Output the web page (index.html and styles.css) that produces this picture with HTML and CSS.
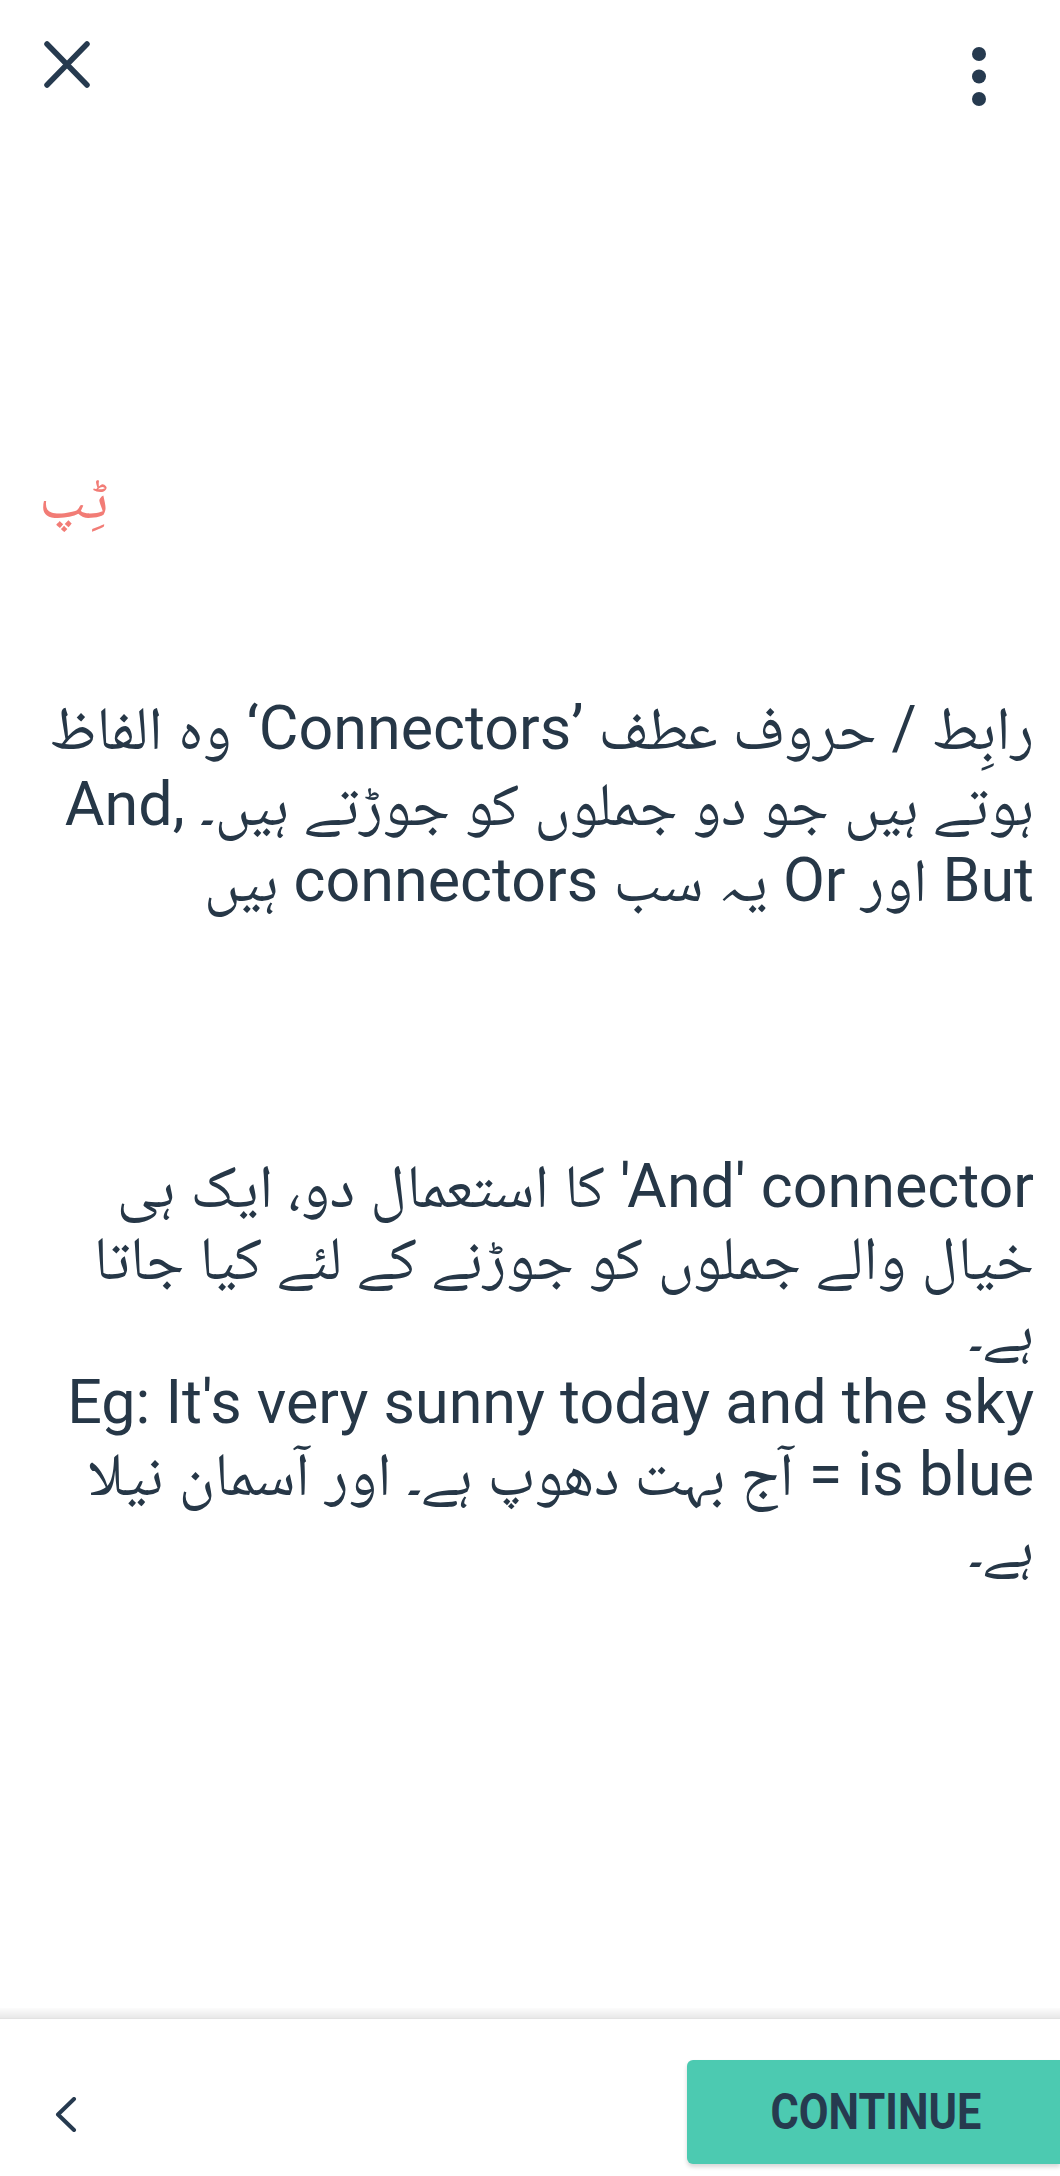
FILE: index.html
```html
<!DOCTYPE html>
<html lang="ur">
<head>
<meta charset="utf-8">
<title>ٹِپ</title>
<link rel="stylesheet" href="styles.css">
</head>
<body>
<div class="page">
  <header class="topbar">
    <svg class="icon-close" width="48" height="49" viewBox="0 0 48 49" aria-label="close">
      <path d="M4 4 L44 45 M44 4 L4 45" stroke="#263a4f" stroke-width="5.5" stroke-linecap="round" fill="none"/>
    </svg>
    <svg class="icon-more" width="16" height="62" viewBox="0 0 16 62" aria-label="more">
      <circle cx="8" cy="8" r="7" fill="#263a4f"/>
      <circle cx="8" cy="30.5" r="7" fill="#263a4f"/>
      <circle cx="8" cy="53" r="7" fill="#263a4f"/>
    </svg>
  </header>

  <main class="content">
    <h1 class="tip-title">ٹِپ</h1>

    <p class="para para-first" dir="rtl">رابِط / حروف عطف ’Connectors‘ وہ الفاظ<br>ہوتے ہیں جو دو جملوں کو جوڑتے ہیں۔ <bdi>And,</bdi><br>But اور Or یہ سب connectors ہیں</p>

    <p class="para para-second" dir="rtl"><bdi>'And' connector</bdi> کا استعمال دو، ایک ہی<br>خیال والے جملوں کو جوڑنے کے لئے کیا جاتا<br>ہے۔<br>Eg: It's very sunny today and the sky<br>is blue = آج بہت دھوپ ہے۔ اور آسمان نیلا<br>ہے۔</p>
  </main>

  <div class="footer-shadow"></div>
  <footer class="footer">
    <svg class="icon-back" width="22" height="35" viewBox="0 0 22 35" aria-label="back">
      <path d="M19 2 L3 17.5 L19 33" stroke="#263a4f" stroke-width="4" stroke-linecap="round" stroke-linejoin="round" fill="none"/>
    </svg>
    <button class="continue-btn" type="button"><span class="continue-label">CONTINUE</span></button>
  </footer>
</div>
</body>
</html>
```

FILE: styles.css
```css
html, body {
  margin: 0;
  padding: 0;
  background: #ffffff;
}

body {
  font-family: Roboto, "Noto Naskh Arabic", "Noto Sans Arabic", "DejaVu Sans", sans-serif;
  color: #263747;
}

.page {
  width: 1060px;
  height: 2176px;
  display: flex;
  flex-direction: column;
  overflow: hidden;
}

.topbar {
  display: flex;
  justify-content: space-between;
  align-items: flex-start;
  padding: 40px 73px 0 43px;
  flex: 0 0 auto;
}

.icon-close {
  display: block;
}

.icon-more {
  display: block;
  margin-top: 6px;
}

.content {
  flex: 1 1 auto;
  padding: 0 26px 0 20px;
}

.tip-title {
  margin: 350px 0 0 19px;
  font-weight: 400;
  font-size: 60px;
  line-height: 80px;
  color: #f27c76;
  text-align: left;
  direction: ltr;
}

.para {
  margin: 0;
  font-size: 61px;
  text-align: right;
  white-space: nowrap;
  color: #263747;
}

.para-first {
  margin-top: 152px;
  line-height: 76px;
}

.para-second {
  margin-top: 232px;
  line-height: 72px;
}

.footer-shadow {
  flex: 0 0 auto;
  height: 10px;
  background: linear-gradient(to bottom, rgba(0, 0, 0, 0.01), rgba(0, 0, 0, 0.09));
  border-bottom: 1px solid #e2e2e2;
}

.footer {
  flex: 0 0 157px;
  display: flex;
  justify-content: space-between;
  align-items: flex-start;
  padding: 41px 0 0 55px;
  box-sizing: border-box;
}

.icon-back {
  display: block;
  margin-top: 37px;
}

.continue-btn {
  width: 373px;
  height: 104px;
  border: none;
  border-radius: 6px 0 0 6px;
  background: #4ccab1;
  box-shadow: 0 3px 4px rgba(0, 0, 0, 0.16);
  display: flex;
  align-items: center;
  justify-content: center;
  padding: 0 0 0 4px;
  cursor: pointer;
}

.continue-label {
  display: inline-block;
  font-family: Roboto, "Liberation Sans", sans-serif;
  font-weight: 700;
  font-size: 50px;
  color: #263a4f;
  transform: scaleX(0.865);
}
```
